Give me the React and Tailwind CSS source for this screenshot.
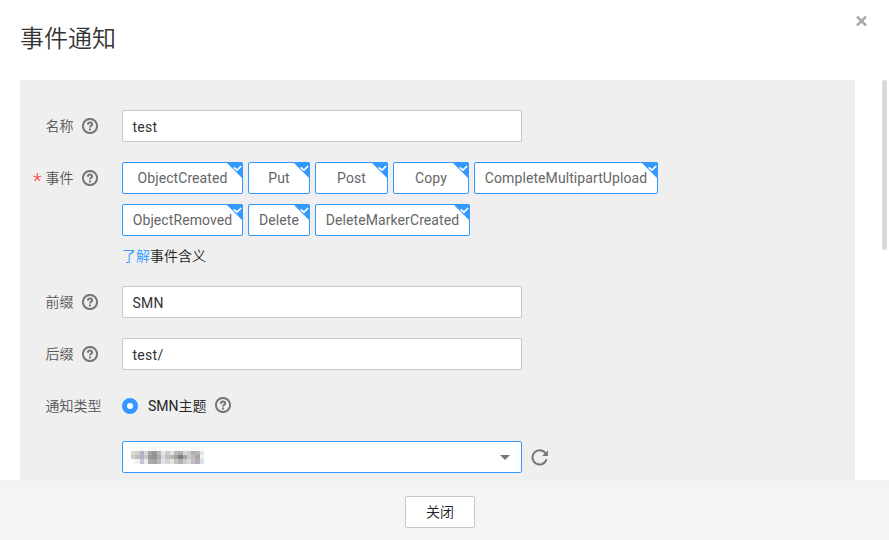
const TAG_ROWS = [
  [
    { label: "ObjectCreated", box: "w-[121px]" },
    { label: "Put", box: "w-[62px]" },
    { label: "Post", box: "w-[73px]" },
    { label: "Copy", box: "w-[76px]" },
    { label: "CompleteMultipartUpload", box: "w-[184px]" },
  ],
  [
    { label: "ObjectRemoved", box: "w-[121px]" },
    { label: "Delete", box: "w-[62px]" },
    { label: "DeleteMarkerCreated", box: "w-[155px]" },
  ],
];

// Pixelated mask over the private topic name.
const MOSAIC = [
  ["#fcfcfc", "#fcfcfc", "#fafafc", "#fbfbfb", "#f9f9f9", "#f8f8f8", "#fafafa", "#fbfbfb", "#fafafa", "#fcfcfc", "#f8f8f8", "#fbfbfb", "#f9f9f9", "#fcfcfc", "#fafafa", "#f9f9f9", "#fcfcfc"],
  ["#d8d8d2", "#d0d0cc", "#b4b0c8", "#d8d8d8", "#a4a6a4", "#989498", "#b4b8b4", "#e2e6e8", "#c8ccd0", "#e4e0e0", "#bcbcc0", "#b0b0b0", "#d8d4d0", "#c8ccd0", "#b2aeb2", "#b8b4b8", "#dfe5ea"],
  ["#cdcdc5", "#c0c0bc", "#b8b0c8", "#c8c8c8", "#9a9a9a", "#988c98", "#aaaaaa", "#d8dce0", "#c4bcc0", "#b8b8b8", "#a0a0a0", "#7c807e", "#a4a8a8", "#c8c8d0", "#c4bcc0", "#a8a4a0", "#f0f0f0"],
  ["#fafaf8", "#f0f0ec", "#c8c4d8", "#ececec", "#a8aaa8", "#a4a4a4", "#b8b8b8", "#e0e4e8", "#d4d4d8", "#e8e4e0", "#c4c4c4", "#b0b4b0", "#c8ccd0", "#dcd8dc", "#c0bcc0", "#b0b0b4", "#d8e2ea"],
];

function Help() {
  return (
    <svg className="size-4 shrink-0" viewBox="0 0 16 16" fill="none" stroke="#777" strokeWidth="2">
      <circle cx="8" cy="8" r="7.100" />
      <path d="M5.900 6.700C5.900 5.200 6.800 4.600 8 4.600s2.100.7 2.100 1.800C10.100 7.800 8 7.900 8 9.600" />
      <path d="M8 10.500v2" />
    </svg>
  );
}

function Label({ text, required, help = true }) {
  return (
    <div className="flex h-8 w-[89px] shrink-0 items-center text-[14px] text-[#555]">
      <span className="w-[12.500px] shrink-0 pt-1.5 text-[20px] leading-none font-light text-[#ff4040]">{required ? "*" : ""}</span>
      <span className="font-[350] whitespace-nowrap">{text}</span>
      {help && <span className="ml-2"><Help /></span>}
    </div>
  );
}

function TextField({ value }) {
  return (
    <div className="flex h-8 w-[400px] items-center rounded-[2px] border border-[#c8c8c8] bg-white px-[9.500px] pt-0.5 tracking-[0.020em] text-[#333]">
      {value}
    </div>
  );
}

function Tag({ label, box }) {
  return (
    <div className={`relative flex h-8 items-center justify-center rounded-[2px] border border-[#3399ff] bg-white tracking-[0.006em] text-[#666] ${box}`}>
      {label}
      <svg className="absolute -top-px -right-px" width="17" height="17" viewBox="0 0 17 17">
        <path d="M0 0h15a2 2 0 0 1 2 2v15z" fill="#3399ff" />
        <path d="M7.700 5.300l3.300 2.900L15.200 4" fill="none" stroke="#fff" strokeWidth="1.700" />
      </svg>
    </div>
  );
}

export default function App() {
  return (
    <div className="flex h-[540px] w-[889px] flex-col overflow-hidden bg-white font-['Roboto','Noto_Sans_CJK_SC',sans-serif] text-[14px] leading-5">
      <header className="flex h-20 shrink-0 justify-between pr-[22px] pl-5">
        <h1 className="pt-[21px] text-[24px] leading-9 font-[350] text-[#333]">事件通知</h1>
        <svg className="mt-4" width="11" height="10" viewBox="0 0 11 10" stroke="#aaa" strokeWidth="2.600">
          <path d="M1 .5l9 9M10 .5l-9 9" />
        </svg>
      </header>

      <div className="flex h-[400px] shrink-0 justify-between overflow-hidden pr-0.5 pl-5">
        <main className="flex w-[835px] flex-col bg-[#efefef] pt-[30px] pl-[13px]">
          <div className="flex h-[52px] shrink-0">
            <Label text="名称" />
            <TextField value="test" />
          </div>
          <div className="flex h-[124px] shrink-0">
            <Label text="事件" required />
            <div>
              <div className="flex flex-col gap-2.5">
                {TAG_ROWS.map((row, i) => (
                  <div key={i} className="flex gap-[5px]">
                    {row.map((tag) => <Tag key={tag.label} {...tag} />)}
                  </div>
                ))}
              </div>
              <p className="mt-2.5 font-[350] text-[#222]"><a className="text-[#3399ff]">了解</a>事件含义</p>
            </div>
          </div>
          <div className="flex h-[52px] shrink-0">
            <Label text="前缀" />
            <TextField value="SMN" />
          </div>
          <div className="flex h-[52px] shrink-0">
            <Label text="后缀" />
            <TextField value="test/" />
          </div>
          <div className="flex h-[51px] shrink-0">
            <Label text="通知类型" help={false} />
            <div className="flex h-8 items-center">
              <span className="size-4 rounded-full border-5 border-[#3399ff] bg-white" />
              <span className="ml-2.5 text-[#222]">SMN<span className="font-[350]">主题</span></span>
              <span className="ml-2 pb-0.5"><Help /></span>
            </div>
          </div>
          <div className="flex h-8 shrink-0 items-center pl-[89px]">
            <div className="flex h-8 w-[400px] items-center justify-between rounded-[2px] border border-[#3399ff] bg-white pr-[11px] pl-2">
              <div className="flex flex-col pb-1">
                {MOSAIC.map((row, y) => (
                  <div key={y} className="flex">
                    {row.map((color, x) => (
                      <span key={x} className="h-[4.300px] w-[4.300px]" style={{ backgroundColor: color }} />
                    ))}
                  </div>
                ))}
              </div>
              <svg width="10" height="5" viewBox="0 0 10 5"><path d="M0 0h10L5 5z" fill="#777" /></svg>
            </div>
            <svg className="mt-0.5 ml-[9px]" width="18" height="18" viewBox="0 0 18 18" fill="none" stroke="#777" strokeWidth="2">
              <path d="M14.500 4.100A7.200 7.200 0 1 0 15.600 10.300" />
              <path d="M16.900 1.300v5.700h-5.700z" fill="#777" stroke="none" />
            </svg>
          </div>
        </main>
        <div className="h-[170px] w-[5px] rounded-full bg-[#d9d9d9]" />
      </div>

      <footer className="flex h-[60px] shrink-0 items-center justify-center border-t border-[#f1f1f1] bg-[#f4f4f4] pt-[3px] pr-[9px]">
        <button className="h-8 w-[70px] rounded-[2px] border border-[#c8c8c8] bg-white text-[14px] font-[350] text-[#222]">关闭</button>
      </footer>
    </div>
  );
}
